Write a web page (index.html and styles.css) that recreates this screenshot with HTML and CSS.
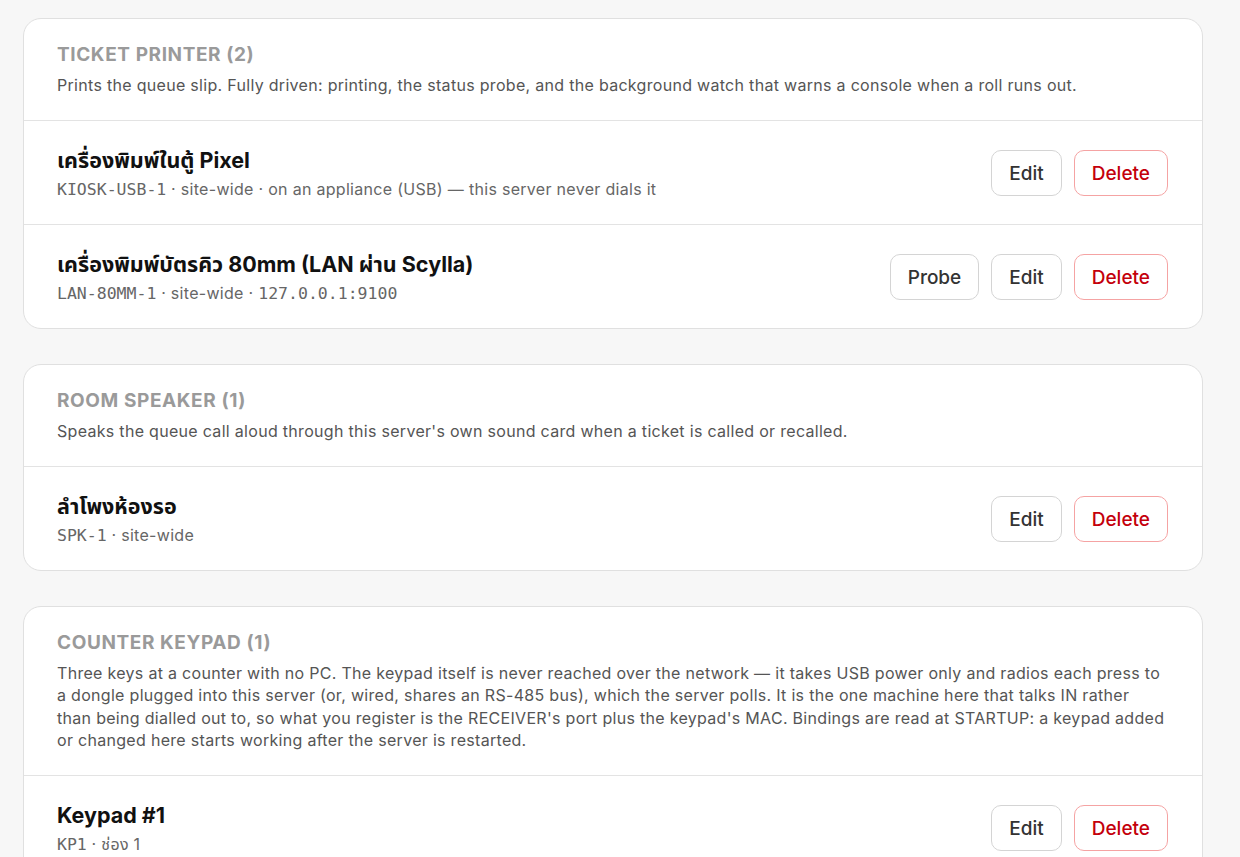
FILE: index.html
```html
<!DOCTYPE html>
<html lang="en">
<head>
<meta charset="utf-8">
<title>Devices</title>
<link rel="stylesheet" href="styles.css">
</head>
<body>
<main class="page">
  <section class="card">
    <header class="card-head">
      <h2 class="card-title">Ticket printer (2)</h2>
      <p class="card-desc">Prints the queue slip. Fully driven: printing, the status probe, and the background watch that warns a console when a roll runs out.</p>
    </header>
    <div class="row">
      <div class="row-info">
        <div class="row-name">เครื่องพิมพ์ในตู้ Pixel</div>
        <div class="row-meta"><span class="code">KIOSK-USB-1</span> · site-wide · on an appliance (USB) — this server never dials it</div>
      </div>
      <div class="actions">
        <button class="btn">Edit</button>
        <button class="btn btn-danger">Delete</button>
      </div>
    </div>
    <div class="row">
      <div class="row-info">
        <div class="row-name">เครื่องพิมพ์บัตรคิว 80mm (LAN ผ่าน Scylla)</div>
        <div class="row-meta"><span class="code">LAN-80MM-1</span> · site-wide · <span class="code">127.0.0.1:9100</span></div>
      </div>
      <div class="actions">
        <button class="btn">Probe</button>
        <button class="btn">Edit</button>
        <button class="btn btn-danger">Delete</button>
      </div>
    </div>
  </section>

  <section class="card">
    <header class="card-head">
      <h2 class="card-title">Room speaker (1)</h2>
      <p class="card-desc">Speaks the queue call aloud through this server's own sound card when a ticket is called or recalled.</p>
    </header>
    <div class="row">
      <div class="row-info">
        <div class="row-name">ลำโพงห้องรอ</div>
        <div class="row-meta"><span class="code">SPK-1</span> · site-wide</div>
      </div>
      <div class="actions">
        <button class="btn">Edit</button>
        <button class="btn btn-danger">Delete</button>
      </div>
    </div>
  </section>

  <section class="card">
    <header class="card-head">
      <h2 class="card-title">Counter keypad (1)</h2>
      <p class="card-desc">Three keys at a counter with no PC. The keypad itself is never reached over the network — it takes USB power only and radios each press to a dongle plugged into this server (or, wired, shares an RS-485 bus), which the server polls. It is the one machine here that talks IN rather than being dialled out to, so what you register is the RECEIVER's port plus the keypad's MAC. Bindings are read at STARTUP: a keypad added or changed here starts working after the server is restarted.</p>
    </header>
    <div class="row">
      <div class="row-info">
        <div class="row-name">Keypad #1</div>
        <div class="row-meta"><span class="code">KP1</span> · ช่อง 1</div>
      </div>
      <div class="actions">
        <button class="btn">Edit</button>
        <button class="btn btn-danger">Delete</button>
      </div>
    </div>
  </section>
</main>
</body>
</html>
```

FILE: styles.css
```css
* { box-sizing: border-box; }

html, body {
  margin: 0;
  padding: 0;
  background: #f7f7f7;
}

body {
  font-family: "Inter", "Noto Sans", "Noto Sans Thai", "DejaVu Sans", sans-serif;
  color: #1a1a1a;
}

.page {
  display: flex;
  flex-direction: column;
  gap: 35px;
  padding: 18px 37px 40px 23px;
}

.card {
  background: #fff;
  border: 1px solid #e0e0e0;
  border-radius: 18px;
  overflow: hidden;
}

.card-head {
  padding: 25px 37px 23.5px 33px;
  border-bottom: 1px solid #e3e3e3;
}

.card-title {
  margin: 0;
  font-size: 19px;
  font-weight: 700;
  line-height: 22px;
  text-transform: uppercase;
  letter-spacing: 0.6px;
  color: #9a9a9a;
}

.card-desc {
  margin: 8px 0 0;
  font-size: 16px;
  line-height: 22.4px;
  letter-spacing: 0.3px;
  color: #555;
}

.row {
  display: flex;
  align-items: center;
  justify-content: space-between;
  padding: 25px 34px 23px 33px;
  border-bottom: 1px solid #e3e3e3;
}

.row:last-child { border-bottom: none; }

.row-name {
  font-size: 21.5px;
  font-weight: 700;
  line-height: 28px;
  color: #111;
}

.row-meta {
  margin-top: 4px;
  font-size: 16px;
  line-height: 23px;
  letter-spacing: 0.3px;
  color: #666;
}

.code {
  font-family: "DejaVu Sans Mono", "Liberation Mono", monospace;
  font-size: 16.5px;
  letter-spacing: 0;
}

.actions {
  display: flex;
  gap: 12px;
}

.btn {
  font-family: inherit;
  font-size: 19px;
  font-weight: 500;
  color: #333;
  background: #fff;
  border: 1px solid #d4d4d4;
  border-radius: 10px;
  height: 46px;
  padding: 0 17px;
  cursor: pointer;
}

.btn-danger {
  color: #c4000b;
  border-color: #f5a3a3;
}
```
